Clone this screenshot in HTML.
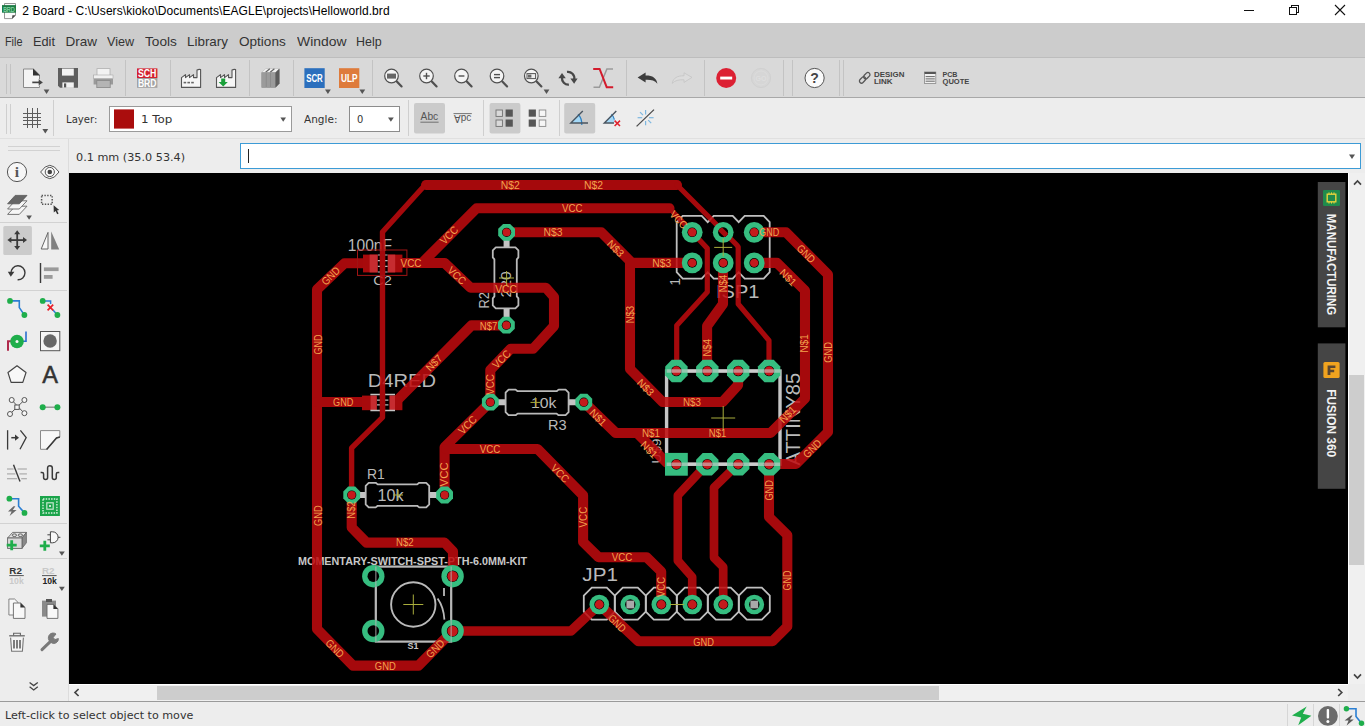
<!DOCTYPE html>
<html>
<head>
<meta charset="utf-8">
<title>2 Board</title>
<style>
*{box-sizing:border-box;margin:0;padding:0}
html,body{width:1365px;height:726px;overflow:hidden;background:#ededed;font-family:"Liberation Sans",sans-serif;color:#333}
.abs{position:absolute}
#title{position:absolute;left:0;top:0;width:1365px;height:23px;background:#fff}
#title .t{position:absolute;left:22.3px;top:4.2px;font-size:12px;line-height:15px;color:#000;white-space:nowrap;letter-spacing:0.06px}
#menu{position:absolute;left:0;top:23px;width:1365px;height:35px;background:#ccc;border-bottom:1px solid #bdbdbd}
#menu span{position:absolute;top:9.5px;font-size:13.5px;line-height:17px;transform-origin:0 0;color:#333;white-space:nowrap}
#tb1{position:absolute;left:0;top:58px;width:1365px;height:40px;background:#d9d9d9;border-bottom:1px solid #a8a8a8}
#tb2{position:absolute;left:0;top:98px;width:1365px;height:41px;background:#ededed;border-bottom:1px solid #e0e0e0}
#left{position:absolute;left:0;top:139px;width:69px;height:562px;background:#ededed}
#cmd{position:absolute;left:69px;top:139px;width:1296px;height:34px;background:#ededed}
#canvas{position:absolute;left:69px;top:173px;width:1279px;height:511px;background:#000;overflow:hidden}
#vs{position:absolute;left:1348px;top:173px;width:17px;height:511px;background:#f0f0f0;border-left:1px solid #fff}
#hs{position:absolute;left:69px;top:684px;width:1279px;height:17px;background:#f0f0f0;border-top:1px solid #fff}
#status{position:absolute;left:0;top:701px;width:1365px;height:25px;background:#ededed;border-top:1px solid #9a9a9a}
.sep{position:absolute;width:1px;background:#c4c4c4}
svg{position:absolute;overflow:visible}
</style>
</head>
<body>
<div id="title">
<svg width="20" height="23" style="left:0;top:0" viewBox="0 0 20 23">
<path d="M4.5 3.5 H15.5 V15.4 L12.2 18.6 H4.5 Z" fill="#fbfbfb" stroke="#8a8a8a" stroke-width="0.9"/>
<path d="M15.6 15.2 L12 18.8 L12.4 15.2 Z" fill="#444"/>
<rect x="2" y="5.1" width="14" height="7.6" fill="#1d7c46"/>
<text x="9" y="11.7" font-size="7.4" fill="#a6f0c2" text-anchor="middle" textLength="11.6" lengthAdjust="spacingAndGlyphs">BRD</text>
</svg>
<div class="t">2 Board - C:\Users\kioko\Documents\EAGLE\projects\Helloworld.brd</div>
<svg width="140" height="23" style="left:1225px;top:0" viewBox="1225 0 140 23">
<g stroke="#111" stroke-width="1" fill="none">
<line x1="1244" y1="10.5" x2="1254" y2="10.5" shape-rendering="crispEdges"/>
<path d="M1289.5 7.5 H1296.5 V14.5 H1289.5 Z M1291.5 7.5 V5.5 H1298.5 V12.5 H1296.5" shape-rendering="crispEdges"/>
<path d="M1335 5 L1345 15 M1345 5 L1335 15" stroke-width="1.1"/>
</g>
</svg>
</div>
<div id="menu">
<span style="left:4.5px;transform:scaleX(0.803)">File</span><span style="left:32.5px;transform:scaleX(0.944)">Edit</span><span style="left:65.5px;transform:scaleX(1.000)">Draw</span><span style="left:107.3px;transform:scaleX(0.937)">View</span><span style="left:144.6px;transform:scaleX(1.010)">Tools</span><span style="left:187px;transform:scaleX(0.993)">Library</span><span style="left:239px;transform:scaleX(1.004)">Options</span><span style="left:296.5px;transform:scaleX(1.031)">Window</span><span style="left:356px;transform:scaleX(0.921)">Help</span>
</div>
<div id="tb1">
<!--TB1S-->
<svg width="1365" height="40" style="left:0;top:0" viewBox="0 58 1365 40">
<g stroke="#c3c3c3" stroke-width="1" shape-rendering="crispEdges">
<line x1="6.5" y1="64" x2="6.5" y2="94"/><line x1="10.5" y1="64" x2="10.5" y2="94"/>
<line x1="125.5" y1="60" x2="125.5" y2="96"/><line x1="170.5" y1="60" x2="170.5" y2="96"/><line x1="249.5" y1="60" x2="249.5" y2="96"/><line x1="293.5" y1="60" x2="293.5" y2="96"/><line x1="372.5" y1="60" x2="372.5" y2="96"/><line x1="626.5" y1="60" x2="626.5" y2="96"/><line x1="704.5" y1="60" x2="704.5" y2="96"/><line x1="783.5" y1="60" x2="783.5" y2="96"/><line x1="792.5" y1="60" x2="792.5" y2="96"/><line x1="839.5" y1="60" x2="839.5" y2="96"/><line x1="843.5" y1="60" x2="843.5" y2="96"/>
</g>
<!-- new doc -->
<path d="M23.5 69 H33.5 L39.5 75 V87.5 H23.5 Z" fill="#f4f4f4" stroke="#8a8a8a" stroke-width="1"/>
<path d="M33 68.6 L40 75.6 H33 Z" fill="#333"/>
<path d="M32 81.2 H38.4 V78.8 L43.4 82.4 L38.4 86 V83.6 H32 Z" fill="#444" stroke="#f4f4f4" stroke-width="0.6"/>
<path d="M43.7 89.5 H49.4 L46.55 94 Z" fill="#555"/>
<!-- save -->
<path d="M58 68 H78 V87.8 H60 L58 85.8 Z" fill="#5e5e5e"/>
<rect x="62" y="68.6" width="11.8" height="7" fill="#f2f2f2"/>
<rect x="62.4" y="82.4" width="11.4" height="5.4" fill="#f2f2f2"/>
<rect x="64" y="83.4" width="2.2" height="4" fill="#555"/>
<!-- print -->
<rect x="97" y="68.6" width="13" height="7" fill="#f2f2f2" stroke="#b0b0b0" stroke-width="0.8"/>
<path d="M93.6 75 H113 V84.5 H93.6 Z" fill="#9a9a9a"/>
<rect x="93.6" y="75" width="19.4" height="3.6" fill="#f0f0f0" stroke="#aaa" stroke-width="0.6"/>
<rect x="96.8" y="80.6" width="13.4" height="7" fill="#b4b4b4" stroke="#888" stroke-width="0.8"/>
<!-- SCH BRD -->
<rect x="137" y="68.4" width="20.4" height="9.6" fill="#d4212f"/>
<rect x="137" y="78" width="20.4" height="9.8" fill="#a2a2a2"/>
<text x="147.2" y="76.9" font-size="10" font-weight="bold" fill="#fff" text-anchor="middle" textLength="18.6" lengthAdjust="spacingAndGlyphs">SCH</text>
<text x="147.2" y="86.5" font-size="10" font-weight="bold" fill="#fff" text-anchor="middle" textLength="18.6" lengthAdjust="spacingAndGlyphs">BRD</text>
<!-- factory 1 -->
<g id="fac" fill="#f6f6f6" stroke="#555" stroke-width="1.1" stroke-linejoin="round">
<path d="M181.5 87.4 V77.6 L185.5 74.6 V77.6 L189.5 74.6 V77.6 L193.5 74.6 V77.6 H197 V70 Q199 69 200.6 69.6 V87.4 Z"/>
</g>
<g fill="#666"><rect x="183.6" y="81.8" width="2.6" height="1.6"/><rect x="187.4" y="81.8" width="2.6" height="1.6"/><rect x="191.2" y="81.8" width="2.6" height="1.6"/></g>
<!-- factory 2 -->
<g fill="#f6f6f6" stroke="#555" stroke-width="1.1" stroke-linejoin="round">
<path d="M216.5 87.4 V77.6 L220.5 74.6 V77.6 L224.5 74.6 V77.6 L228.5 74.6 V77.6 H232 V70 Q234 69 235.6 69.6 V87.4 Z"/>
</g>
<path d="M221.2 78.4 H225.2 V82 H227.8 L223.2 86.6 L218.6 82 H221.2 Z" fill="#1aa03a"/>
<!-- books -->
<g>
<path d="M261.6 72.4 L266 68.6 H279.4 V83.6 L275.6 87.6 H261.6 Z" fill="#777"/>
<path d="M261.6 72.4 L266 68.6 H279.4 L275.4 72.4 Z" fill="#f0f0f0"/>
<path d="M265.6 72.2 L269.8 68.8 M270.2 72.2 L274.4 68.8" stroke="#666" stroke-width="1.2"/>
<rect x="261.6" y="72.4" width="4.3" height="15.2" fill="#9b9b9b"/>
<rect x="266.3" y="72.4" width="4.3" height="15.2" fill="#9b9b9b"/>
<rect x="271" y="72.4" width="4.4" height="15.2" fill="#9b9b9b"/>
<path d="M275.6 72.4 L279.4 68.8 V83.6 L275.6 87.6 Z" fill="#5c5c5c"/>
</g>
<!-- SCR -->
<rect x="304.4" y="68.2" width="20.3" height="19.8" fill="#2b6fbd"/>
<text x="314.5" y="81.8" font-size="10.6" font-weight="bold" fill="#fff" text-anchor="middle" textLength="16.6" lengthAdjust="spacingAndGlyphs">SCR</text>
<path d="M325 89.5 H330.8 L327.9 94 Z" fill="#555"/>
<!-- ULP -->
<rect x="339" y="68.2" width="20.3" height="19.8" fill="#de7b3b"/>
<text x="349.2" y="81.8" font-size="10.6" font-weight="bold" fill="#fff" text-anchor="middle" textLength="16.6" lengthAdjust="spacingAndGlyphs">ULP</text>
<path d="M359.4 89.5 H365.2 L362.3 94 Z" fill="#555"/>
<!-- zoom icons -->
<g fill="#f4f4f4" stroke="#505050" stroke-width="1.2">
<circle cx="391.5" cy="76" r="6.8"/><circle cx="426.5" cy="76" r="6.8"/><circle cx="461.5" cy="76" r="6.8"/><circle cx="497" cy="76" r="6.8"/><circle cx="531.3" cy="76" r="6.8"/>
</g>
<g stroke="#505050" stroke-width="2.2" stroke-linecap="round">
<line x1="396.8" y1="81.4" x2="401.6" y2="86.4"/><line x1="431.8" y1="81.4" x2="436.6" y2="86.4"/><line x1="466.8" y1="81.4" x2="471.6" y2="86.4"/><line x1="502.3" y1="81.4" x2="507.1" y2="86.4"/><line x1="536.6" y1="81.4" x2="541.4" y2="86.4"/>
</g>
<rect x="387" y="73.6" width="9" height="5" fill="#666"/>
<g stroke="#505050" stroke-width="1.4">
<line x1="423.3" y1="76" x2="429.7" y2="76"/><line x1="426.5" y1="72.8" x2="426.5" y2="79.2"/>
<line x1="458.6" y1="76" x2="464.4" y2="76"/>
<line x1="494" y1="74.6" x2="500" y2="74.6"/><line x1="494" y1="77.6" x2="500" y2="77.6"/>
</g>
<rect x="527" y="73.6" width="8.6" height="5" fill="#eee" stroke="#555" stroke-width="1"/>
<rect x="528" y="74.6" width="3.4" height="3" fill="#666"/>
<path d="M543.6 89.5 H549.4 L546.5 94 Z" fill="#555"/>
<!-- refresh -->
<g fill="none" stroke="#484848" stroke-width="2.3">
<path d="M562 77.6 A6.4 6.4 0 0 0 568.9 84.6"/>
<path d="M567 71.9 A6.4 6.4 0 0 1 574.2 79.4"/>
</g>
<path d="M562 73 L565.8 78.2 H558.4 Z" fill="#484848"/>
<path d="M574.1 83.8 L570.4 78.6 H577.6 Z" fill="#484848"/>
<!-- X ratsnest -->
<path d="M593.5 87.2 H599.4 L606.9 69 H613" fill="none" stroke="#9a9a9a" stroke-width="1.5"/>
<path d="M593.2 69 H599.6 L606.7 87.2 H613.2" fill="none" stroke="#d31b2c" stroke-width="2"/>
<!-- undo -->
<path d="M637.6 77.4 L645.6 72.6 V75.6 C652 75.4 656.6 78 657.4 83.8 C654.6 80.4 651 79.6 645.6 79.8 V82.6 Z" fill="#3c3c3c"/>
<!-- redo disabled -->
<path d="M692 77.4 L684 72.8 V75.8 C677.6 75.6 673 78 672.2 83.4 C675 80.4 678.6 79.6 684 79.8 V82.4 Z" fill="#dcdcdc" stroke="#c6c6c6" stroke-width="0.9"/>
<!-- stop -->
<circle cx="726.2" cy="78" r="10" fill="#dc2033"/>
<rect x="720.2" y="76.6" width="12" height="2.9" fill="#fff"/>
<!-- go disabled -->
<circle cx="761" cy="78" r="9.6" fill="#d6d6d6" stroke="#d0d0d0" stroke-width="1"/>
<circle cx="761" cy="78" r="7" fill="none" stroke="#dcdcdc" stroke-width="1"/>
<text x="761" y="80.6" font-size="7" font-weight="bold" fill="#dedede" text-anchor="middle">GO</text>
<!-- help -->
<circle cx="814.6" cy="78" r="9.6" fill="#fafafa" stroke="#555" stroke-width="1"/>
<text x="814.6" y="83.2" font-size="14" font-weight="bold" fill="#444" text-anchor="middle">?</text>
<!-- design link -->
<g fill="none" stroke="#555" stroke-width="1.3">
<rect x="-3.6" y="-2.1" width="7.2" height="4.2" rx="2.1" transform="translate(862.6 79.9) rotate(-45)"/>
<rect x="-3.6" y="-2.1" width="7.2" height="4.2" rx="2.1" transform="translate(866.8 75.7) rotate(-45)"/>
</g>
<text x="874" y="76.8" font-size="7.8" font-weight="bold" fill="#444" textLength="30.4" lengthAdjust="spacingAndGlyphs">DESIGN</text>
<text x="874" y="84" font-size="7.8" font-weight="bold" fill="#444" textLength="18.6" lengthAdjust="spacingAndGlyphs">LINK</text>
<!-- pcb quote -->
<rect x="924.6" y="72" width="11.2" height="11.4" fill="#f0f0f0" stroke="#888" stroke-width="0.8"/>
<rect x="924.6" y="72" width="11.2" height="2" fill="#555"/>
<g stroke="#666" stroke-width="1"><line x1="925.6" y1="76.6" x2="934.8" y2="76.6"/><line x1="925.6" y1="78.9" x2="934.8" y2="78.9"/><line x1="925.6" y1="81.2" x2="934.8" y2="81.2"/></g>
<text x="942.5" y="76.8" font-size="7.8" font-weight="bold" fill="#444" textLength="15" lengthAdjust="spacingAndGlyphs">PCB</text>
<text x="942.5" y="84" font-size="7.8" font-weight="bold" fill="#444" textLength="26.9" lengthAdjust="spacingAndGlyphs">QUOTE</text>
</svg>
<!--TB1E-->
</div>
<div id="tb2">
<!--TB2S-->
<svg width="1365" height="41" style="left:0;top:0" viewBox="0 98 1365 41">
<g stroke="#cfcfcf" stroke-width="1" shape-rendering="crispEdges">
<line x1="6.5" y1="104" x2="6.5" y2="134"/><line x1="10.5" y1="104" x2="10.5" y2="134"/>
<line x1="53.5" y1="100" x2="53.5" y2="136"/><line x1="408.5" y1="100" x2="408.5" y2="136"/><line x1="483.5" y1="100" x2="483.5" y2="136"/><line x1="559.5" y1="100" x2="559.5" y2="136"/>
</g>
<!-- grid icon -->
<g stroke="#5c5c5c" stroke-width="1" shape-rendering="crispEdges">
<line x1="22.5" y1="113.5" x2="41" y2="113.5"/><line x1="22.5" y1="117" x2="41" y2="117"/><line x1="22.5" y1="120.5" x2="41" y2="120.5"/><line x1="22.5" y1="124" x2="41" y2="124"/>
<line x1="27.5" y1="108" x2="27.5" y2="128"/><line x1="32.5" y1="108" x2="32.5" y2="128"/><line x1="37.5" y1="108" x2="37.5" y2="128"/>
</g>
<path d="M42.4 129 H48.2 L45.3 133.5 Z" fill="#555"/>
<!-- Layer select -->
<rect x="109.5" y="106.5" width="182" height="25" fill="#fff" stroke="#9a9a9a" stroke-width="1"/>
<rect x="114" y="109.4" width="20" height="19.2" fill="#aa0d0d"/>
<path d="M280.4 117.4 H286 L283.2 121.8 Z" fill="#555"/>
<!-- angle select -->
<rect x="349.5" y="106.5" width="50" height="25" fill="#fff" stroke="#8c8c8c" stroke-width="1"/>
<path d="M388 117.4 H393.8 L390.9 121.8 Z" fill="#555"/>
<!-- Abc buttons -->
<rect x="414" y="103" width="31" height="30.5" rx="2" fill="#cbcbcb"/>
<text x="420.6" y="120.3" font-size="10.2" fill="#555" textLength="17.6" lengthAdjust="spacingAndGlyphs">Abc</text>
<line x1="420.4" y1="122.2" x2="438.6" y2="122.2" stroke="#666" stroke-width="0.9"/>
<g transform="translate(0 237.2) scale(1 -1)">
<text x="454" y="122" font-size="10.2" fill="#555" textLength="17.2" lengthAdjust="spacingAndGlyphs">Abc</text>
</g>
<line x1="453.5" y1="113.6" x2="471.8" y2="113.6" stroke="#666" stroke-width="0.9"/>
<!-- grid buttons -->
<rect x="489.6" y="103" width="30.8" height="30.5" rx="2" fill="#cbcbcb"/>
<g>
<rect x="496" y="110" width="6.4" height="6.4" fill="#d9d9d9" stroke="#707070" stroke-width="0.9"/>
<rect x="496" y="120" width="6.4" height="6.4" fill="#d9d9d9" stroke="#707070" stroke-width="0.9"/>
<rect x="505.6" y="109.5" width="7.2" height="7.2" fill="#565656"/>
<rect x="505.6" y="119.5" width="7.2" height="7.2" fill="#565656"/>
<rect x="528.7" y="109.5" width="7.2" height="7.2" fill="#565656"/>
<rect x="528.7" y="119.5" width="7.2" height="7.2" fill="#565656"/>
<rect x="539.2" y="110" width="6.6" height="6.4" fill="#f6f6f6" stroke="#8a8a8a" stroke-width="0.9"/>
<rect x="539.2" y="120" width="6.6" height="6.4" fill="#f6f6f6" stroke="#8a8a8a" stroke-width="0.9"/>
</g>
<!-- angle buttons -->
<rect x="564.2" y="103" width="31" height="30.5" rx="2" fill="#cbcbcb"/>
<path d="M571.5 122.8 L578 114.4 A10 10 0 0 1 581.8 122.8 Z" fill="#a3d8f7"/>
<path d="M578 114.2 Q582 118 581.8 125" fill="none" stroke="#2d7fc0" stroke-width="1.2"/>
<path d="M588 123 H570.8 L582.8 111" fill="none" stroke="#4a5560" stroke-width="1.4"/>
<path d="M605 122.8 L611.5 114.4 A10 10 0 0 1 614.4 122.8 Z" fill="#a3d8f7"/>
<path d="M611.5 114.2 Q613.6 116.4 614.4 119.6" fill="none" stroke="#2d7fc0" stroke-width="1.2"/>
<path d="M614 123 H604.3 L616.3 111" fill="none" stroke="#4a5560" stroke-width="1.4"/>
<path d="M614.6 120.6 L620 126 M620 120.6 L614.6 126" stroke="#e0202c" stroke-width="1.5"/>
<!-- star -->
<g stroke="#7db7e0" stroke-width="1.2">
<line x1="645.6" y1="110" x2="645.6" y2="114.4"/><line x1="645.6" y1="121" x2="645.6" y2="125.2"/>
<line x1="637.6" y1="117.7" x2="642.2" y2="117.7"/><line x1="649" y1="117.7" x2="653.6" y2="117.7"/>
<line x1="640" y1="112.2" x2="643" y2="115.2"/><line x1="648.2" y1="120.2" x2="651.2" y2="123.2"/>
</g>
<line x1="636.6" y1="126.4" x2="654" y2="109.6" stroke="#4a4a4a" stroke-width="1.3"/>
</svg>
<div class="abs" id="lay" style="left:65.6px;top:13.7px;font-family:'DejaVu Sans','Liberation Sans',sans-serif;font-size:11px;line-height:16px;white-space:nowrap;color:#333;transform-origin:0 0;transform:scaleX(0.92)">Layer:</div>
<div class="abs" id="top1" style="left:140.8px;top:13.7px;font-family:'DejaVu Sans','Liberation Sans',sans-serif;font-size:11px;line-height:16px;white-space:nowrap;color:#333;transform-origin:0 0;transform:scaleX(1.08)">1 Top</div>
<div class="abs" id="ang" style="left:304px;top:13.7px;font-family:'DejaVu Sans','Liberation Sans',sans-serif;font-size:11px;line-height:16px;white-space:nowrap;color:#333;transform-origin:0 0;transform:scaleX(0.955)">Angle:</div>
<div class="abs" id="zero" style="left:356.6px;top:13.7px;font-family:'DejaVu Sans','Liberation Sans',sans-serif;font-size:11px;line-height:16px;white-space:nowrap;color:#333;transform-origin:0 0;transform:scaleX(0.9)">0</div>
<!--TB2E-->
</div>
<div id="left">
<!--LEFTS-->
<svg width="69" height="562" style="left:0;top:0" viewBox="0 139 69 562">
<line x1="68.5" y1="139" x2="68.5" y2="701" stroke="#dcdcdc" stroke-width="1"/>
<g stroke="#d2d2d2" stroke-width="1" shape-rendering="crispEdges">
<line x1="8" y1="146.5" x2="60" y2="146.5"/><line x1="8" y1="150.5" x2="60" y2="150.5"/>
<line x1="0" y1="222.5" x2="67" y2="222.5"/><line x1="0" y1="290.5" x2="67" y2="290.5"/><line x1="0" y1="523.5" x2="67" y2="523.5"/><line x1="0" y1="558.5" x2="67" y2="558.5"/>
</g>
<!-- info -->
<circle cx="17" cy="172" r="9.6" fill="#f6f6f6" stroke="#555" stroke-width="1"/>
<text x="17" y="177.4" font-family="Liberation Serif,serif" font-weight="bold" font-size="15.5" fill="#555" text-anchor="middle">i</text>
<!-- eye -->
<path d="M40.6 172 Q49.8 158.6 59 172 Q49.8 185.4 40.6 172 Z" fill="#f8f8f8" stroke="#555" stroke-width="1"/>
<circle cx="49.8" cy="172" r="4.6" fill="none" stroke="#555" stroke-width="1"/>
<circle cx="49.8" cy="172" r="2.3" fill="#444"/>
<!-- layers -->
<path d="M15.2 206.2 H27 L19.3 214.4 H7.6 Z" fill="#f6f6f6" stroke="#666" stroke-width="0.9"/>
<path d="M15.2 200.8 H27 L19.3 209 H7.6 Z" fill="#f6f6f6" stroke="#666" stroke-width="0.9"/>
<path d="M15.2 195.4 H27 L19.3 203.8 H7.6 Z" fill="#666" stroke="#555" stroke-width="0.8"/>
<path d="M26.3 215.4 H31.9 L29.1 219.7 Z" fill="#555"/>
<!-- group select -->
<rect x="41.6" y="195.6" width="10.6" height="8.6" fill="none" stroke="#555" stroke-width="1.5" stroke-dasharray="1.4 1.4"/>
<path d="M53.6 205.2 L53.8 212.6 L55.6 211 L57.2 214.2 L58.6 213.5 L57 210.4 L59.2 210 Z" fill="#333"/>
<!-- move -->
<rect x="3.3" y="226" width="28.6" height="29" rx="1.5" fill="#cbcbcb"/>
<g fill="#3a3a3a">
<rect x="16.3" y="233" width="1.8" height="14.4"/><rect x="10" y="239.2" width="14.4" height="1.8"/>
<path d="M17.2 230.2 L20.2 234.2 H14.2 Z"/><path d="M17.2 250 L20.2 246 H14.2 Z"/>
<path d="M7.4 240.1 L11.4 237.1 V243.1 Z"/><path d="M27 240.1 L23 237.1 V243.1 Z"/>
</g>
<!-- mirror -->
<path d="M41.2 249 L48 232.4 V249 Z" fill="#f8f8f8" stroke="#666" stroke-width="1"/>
<path d="M51.2 231.4 L59.2 249.4 H51.2 Z" fill="#808080"/>
<!-- rotate -->
<path d="M11 273.4 A7 7 0 1 1 17.6 279.8" fill="none" stroke="#3a3a3a" stroke-width="1.4"/>
<path d="M7.8 271.8 H14.4 L10.8 276.8 Z" fill="#3a3a3a"/>
<!-- align -->
<line x1="40.5" y1="263" x2="40.5" y2="283" stroke="#3a3a3a" stroke-width="1.4"/>
<rect x="43.9" y="267.4" width="14.7" height="3.7" fill="#9a9a9a"/><rect x="43.9" y="275" width="8.7" height="3.8" fill="#9a9a9a"/>
<!-- route -->
<path d="M10 300.9 H19.3 V307.6 L24.4 315" fill="none" stroke="#2b7fd3" stroke-width="1.6"/>
<circle cx="10" cy="300.9" r="2.9" fill="#1fae4b"/><circle cx="24.4" cy="315" r="2.9" fill="#1fae4b"/>
<!-- ripup -->
<path d="M42.7 300.9 H50.6 V304" fill="none" stroke="#2b7fd3" stroke-width="1.5"/>
<path d="M53 310 L57.4 315" fill="none" stroke="#2b7fd3" stroke-width="1.5"/>
<circle cx="42.7" cy="300.9" r="2.9" fill="#1fae4b"/><circle cx="57.4" cy="315" r="2.9" fill="#1fae4b"/>
<path d="M47.6 304.6 L53.2 310.4 M53.2 304.6 L47.6 310.4" stroke="#e8202c" stroke-width="1.7"/>
<!-- via -->
<path d="M8 350.8 V341.2 H12" fill="none" stroke="#b02a4c" stroke-width="2"/>
<path d="M26 331.6 V341.3 H22" fill="none" stroke="#2b6fd0" stroke-width="1.6"/>
<circle cx="17" cy="341.5" r="6.8" fill="#1fae4b"/><circle cx="17" cy="341.5" r="1.5" fill="#f4f4f4"/>
<!-- hole -->
<rect x="40.5" y="331.5" width="19.3" height="19.2" fill="#f6f6f6" stroke="#555" stroke-width="1"/>
<circle cx="50.1" cy="341" r="6.7" fill="#686868"/>
<!-- polygon -->
<path d="M17 365.8 L26 372.6 L22.8 382.4 H11.1 L8 372.6 Z" fill="#f8f8f8" stroke="#444" stroke-width="1.2" stroke-linejoin="round"/>
<!-- text A -->
<text x="50.1" y="382.6" font-size="23.6" fill="#333" text-anchor="middle" stroke="#333" stroke-width="0.5">A</text>
<!-- fanout -->
<g stroke="#555" stroke-width="1" fill="#f6f6f6">
<path d="M11.7 400 L24.4 413.4 M24.4 400 L10 414" fill="none"/>
<circle cx="11.7" cy="400" r="2.5"/><circle cx="24.4" cy="400" r="2.5"/><circle cx="10" cy="414" r="2.5"/><circle cx="24.4" cy="413.2" r="2.5"/>
<rect x="14.8" y="405" width="4.4" height="4.4"/>
</g>
<!-- link -->
<line x1="42.7" y1="407.2" x2="57.4" y2="407.2" stroke="#8a8a8a" stroke-width="1.3"/>
<circle cx="42.7" cy="407.2" r="3" fill="#1fae4b"/><circle cx="57.4" cy="407.2" r="3" fill="#1fae4b"/>
<!-- split -->
<g stroke="#3a3a3a" stroke-width="1.3" fill="none">
<line x1="7.6" y1="430.2" x2="7.6" y2="449.6"/>
<path d="M20.4 430.4 L26.2 437.5 L20 449.2"/>
<line x1="11.3" y1="437.7" x2="16" y2="437.7" stroke-width="1.5"/>
</g>
<path d="M15 434.6 L19 437.7 L15 440.8 Z" fill="#3a3a3a"/>
<!-- miter -->
<path d="M40.5 430.6 H59.8 V437 L56.5 438 L46.8 449.3 H40.5 Z" fill="#f8f8f8" stroke="#8a8a8a" stroke-width="1"/>
<path d="M46.6 449.4 L56.5 438 L59.9 437" fill="none" stroke="#3a3a3a" stroke-width="1.6"/>
<!-- optimize -->
<g stroke="#ababab" stroke-width="1.2">
<line x1="7" y1="469" x2="13.6" y2="469"/><line x1="17.6" y1="469" x2="26.9" y2="469"/>
<line x1="7" y1="473.9" x2="15.4" y2="473.9"/><line x1="19.4" y1="473.9" x2="26.9" y2="473.9"/>
<line x1="7" y1="478.7" x2="17.2" y2="478.7"/><line x1="21.2" y1="478.7" x2="26.9" y2="478.7"/>
</g>
<line x1="13.5" y1="464.7" x2="20" y2="481.6" stroke="#3a3a3a" stroke-width="1.4"/>
<!-- meander -->
<path d="M40.6 472.4 H42 Q43.6 472.4 43.6 474 V477.4 A2 2 0 0 0 47.6 477.4 V468 A2.35 2.35 0 0 1 52.3 468 V477.4 A2 2 0 0 0 56.3 477.4 V474 Q56.3 472.4 57.9 472.4 H59.3" fill="none" stroke="#3a3a3a" stroke-width="1.5"/>
<!-- autorouter -->
<path d="M9.4 498.7 H18.6 V506.3 L24.5 512.9" fill="none" stroke="#2b7fd3" stroke-width="1.6"/>
<circle cx="9.4" cy="498.7" r="2.9" fill="#1fae4b"/><circle cx="24.5" cy="512.9" r="2.9" fill="#1fae4b"/>
<path d="M13.6 506.2 L8 511.4 H11.6 L9.6 516 L16.6 510 H12.8 L15.4 506.2 Z" fill="#6a6a6a"/>
<!-- DRC -->
<rect x="40" y="496" width="19.9" height="20" fill="#1aa44a"/>
<rect x="43" y="499" width="13.9" height="14" fill="none" stroke="#d8f0df" stroke-width="1.4" stroke-dasharray="1.5 1.2"/>
<rect x="46.8" y="502.8" width="6.4" height="6.4" fill="none" stroke="#c4e8cf" stroke-width="1.2"/>
<rect x="49" y="505" width="2" height="2" fill="#c4e8cf"/>
<!-- add part -->
<path d="M7.6 538 L12.6 532.4 H26.4 L22 538 Z" fill="#e4e4e4" stroke="#666" stroke-width="0.9"/>
<path d="M22 538 L26.4 532.4 V542.8 L22 548.4 Z" fill="#8a8a8a" stroke="#666" stroke-width="0.8"/>
<rect x="7.6" y="538" width="14.4" height="10.4" fill="#d9d9d9" stroke="#666" stroke-width="0.9"/>
<ellipse cx="14.4" cy="535.2" rx="2.2" ry="1.3" fill="none" stroke="#555" stroke-width="0.9"/><ellipse cx="20.4" cy="535.2" rx="2.2" ry="1.3" fill="none" stroke="#555" stroke-width="0.9"/>
<path d="M10.3 540.2 H13.1 V543.8 H16.7 V546.6 H13.1 V550.2 H10.3 V546.6 H6.7 V543.8 H10.3 Z" fill="#1fae4b"/>
<!-- add gate -->
<path d="M50.4 531.8 H52.6 A5.5 5.5 0 0 1 52.6 542.8 H50.4 Z" fill="#f8f8f8" stroke="#444" stroke-width="1"/>
<path d="M47.4 534.8 H50.4 M47.4 539.8 H50.4 M58 537.3 H60.4" stroke="#444" stroke-width="1"/>
<path d="M43.4 540.8 H46.2 V544.4 H49.8 V547.2 H46.2 V550.8 H43.4 V547.2 H39.8 V544.4 H43.4 Z" fill="#1fae4b"/>
<path d="M59 551.4 H64.8 L61.9 555.7 Z" fill="#555"/>
<!-- name -->
<text x="9.3" y="573.8" font-size="8.6" font-weight="bold" fill="#333" textLength="12.6" lengthAdjust="spacingAndGlyphs">R2</text>
<line x1="9.3" y1="575.6" x2="23.8" y2="575.6" stroke="#444" stroke-width="0.9"/>
<text x="9.3" y="583.6" font-size="8.2" font-weight="bold" fill="#c9c9c9" textLength="14.4" lengthAdjust="spacingAndGlyphs">10k</text>
<!-- value -->
<text x="42" y="573.8" font-size="8.6" font-weight="bold" fill="#c9c9c9" textLength="12.6" lengthAdjust="spacingAndGlyphs">R2</text>
<line x1="42" y1="575.6" x2="56.6" y2="575.6" stroke="#444" stroke-width="0.9"/>
<text x="42.4" y="583.6" font-size="8.2" font-weight="bold" fill="#222" textLength="14.4" lengthAdjust="spacingAndGlyphs">10k</text>
<path d="M59 586.8 H64.8 L61.9 591 Z" fill="#555"/>
<!-- copy -->
<path d="M8.9 599 H14.6 L18 602.4 V615 H8.9 Z" fill="#f8f8f8" stroke="#777" stroke-width="0.9"/>
<path d="M13.4 603 H20.6 L25 607.4 V618.4 H13.4 Z" fill="#f8f8f8" stroke="#666" stroke-width="0.9"/>
<path d="M20.4 602.8 L25.2 607.6 H20.4 Z" fill="#333"/>
<!-- paste -->
<rect x="42" y="600.6" width="14" height="16" fill="#8a8a8a"/>
<rect x="46" y="599" width="6" height="3" fill="#555"/>
<path d="M47 604.4 H53.6 L57.9 608.8 V618.4 H47 Z" fill="#f8f8f8" stroke="#666" stroke-width="0.9"/>
<path d="M53.4 604.2 L58 608.9 H53.4 Z" fill="#333"/>
<!-- trash -->
<path d="M13.6 635.4 V633.2 H20.4 V635.4" fill="none" stroke="#666" stroke-width="1.1"/>
<line x1="9.2" y1="635.8" x2="24.8" y2="635.8" stroke="#666" stroke-width="1.3"/>
<path d="M10.6 637.6 L11.6 651.2 H22.4 L23.4 637.6" fill="#f4f4f4" stroke="#777" stroke-width="1.1"/>
<g stroke="#555" stroke-width="1.5"><line x1="14" y1="640" x2="14" y2="648.6"/><line x1="17" y1="640" x2="17" y2="648.6"/><line x1="20" y1="640" x2="20" y2="648.6"/></g>
<!-- wrench -->
<path d="M42 649.6 L51.6 640.4" stroke="#7a7a7a" stroke-width="3" stroke-linecap="round"/>
<path d="M50.2 641.6 A4.6 4.6 0 0 1 56 634 L53.2 637.4 L54.8 639.6 L58.4 638.6 A4.6 4.6 0 0 1 51.4 642.8 Z" fill="#7a7a7a" stroke="#7a7a7a" stroke-width="1"/>
<!-- chevrons -->
<path d="M29.6 682.4 L33.7 685.6 L37.8 682.4 M29.6 686.8 L33.7 690 L37.8 686.8" fill="none" stroke="#444" stroke-width="1.3"/>
</svg>
<!--LEFTE-->
</div>
<div id="cmd">
<div class="abs" id="coord" style="left:7.3px;top:10.8px;font-family:'DejaVu Sans','Liberation Sans',sans-serif;font-size:11px;line-height:16px;white-space:nowrap;color:#333;transform-origin:0 0;transform:scaleX(1.02)">0.1 mm (35.0 53.4)</div>
<div class="abs" style="left:171px;top:4px;width:1121px;height:26px;background:#fff;border:1px solid #3c9bd6"></div>
<div class="abs" style="left:179px;top:10px;width:1px;height:14px;background:#222"></div>
<svg width="10" height="8" style="left:1279px;top:14px" viewBox="0 0 10 8"><path d="M1 1.4 H7 L4 6 Z" fill="#555"/></svg>
</div>
<div id="canvas">
<!--PCBS-->
<svg width="1279" height="511" style="left:0;top:0" viewBox="69 173 1279 511" font-family="Liberation Sans,sans-serif">
<g><path d="M497.3 402.2 H505.6 M568.6 402.2 H576.8" stroke="#c4c4c4" stroke-width="6" fill="none"/>
<polygon points="508.6,389.6 515.6,389.6 517.6,391.2 556.6,391.2 558.6,389.6 565.6,389.6 568.6,392.6 568.6,412.2 565.6,415.2 558.6,415.2 556.6,413.6 517.6,413.6 515.6,415.2 508.6,415.2 505.6,412.2 505.6,392.6" fill="none" stroke="#bababa" stroke-width="1.8" stroke-linejoin="round"/>
<path d="M358.7 495 H365.7 M429.2 495 H437.6" stroke="#c4c4c4" stroke-width="6" fill="none"/>
<polygon points="368.7,482.8 375.7,482.8 377.7,484.4 417.2,484.4 419.2,482.8 426.2,482.8 429.2,485.8 429.2,504.4 426.2,507.4 419.2,507.4 417.2,505.8 377.7,505.8 375.7,507.4 368.7,507.4 365.7,504.4 365.7,485.8" fill="none" stroke="#bababa" stroke-width="1.8" stroke-linejoin="round"/>
<path d="M506.6 240 V247.4 M506.6 308.4 V317" stroke="#c4c4c4" stroke-width="6" fill="none"/>
<polygon points="495.8,247.4 515.4,247.4 518.4,250.4 518.4,257.4 516.8,259.4 516.8,296.4 518.4,298.4 518.4,305.4 515.4,308.4 495.8,308.4 492.8,305.4 492.8,298.4 494.4,296.4 494.4,259.4 492.8,257.4 492.8,250.4" fill="none" stroke="#bababa" stroke-width="1.8" stroke-linejoin="round"/>
<path d="M676.7 222.2 L682.7 215.8 H701.7 L707.7 222.2 L713.7 215.8 H732.7 L738.7 222.2 L744.7 215.8 H763.7 L769.7 222.2 V272.2 L763.7 278.6 H744.7 L738.7 272.2 L732.7 278.6 H713.7 L707.7 272.2 L701.7 278.6 H682.7 L676.7 272.2 Z" fill="none" stroke="#c0c0c0" stroke-width="1.8"/>
<path d="M591.8 587.6 H606.8 L614.8 595.6 V611.6 L606.8 619.6 H591.8 L583.8 611.6 V595.6 Z" fill="none" stroke="#c0c0c0" stroke-width="1.8"/>
<path d="M622.8 587.6 H637.8 L645.8 595.6 V611.6 L637.8 619.6 H622.8 L614.8 611.6 V595.6 Z" fill="none" stroke="#c0c0c0" stroke-width="1.8"/>
<path d="M653.8 587.6 H668.8 L676.8 595.6 V611.6 L668.8 619.6 H653.8 L645.8 611.6 V595.6 Z" fill="none" stroke="#c0c0c0" stroke-width="1.8"/>
<path d="M684.8 587.6 H699.8 L707.8 595.6 V611.6 L699.8 619.6 H684.8 L676.8 611.6 V595.6 Z" fill="none" stroke="#c0c0c0" stroke-width="1.8"/>
<path d="M715.8 587.6 H730.8 L738.8 595.6 V611.6 L730.8 619.6 H715.8 L707.8 611.6 V595.6 Z" fill="none" stroke="#c0c0c0" stroke-width="1.8"/>
<path d="M746.8 587.6 H761.8 L769.8 595.6 V611.6 L761.8 619.6 H746.8 L738.8 611.6 V595.6 Z" fill="none" stroke="#c0c0c0" stroke-width="1.8"/>
<rect x="666.6" y="371" width="113.4" height="93.2" fill="none" stroke="#c6c6c6" stroke-width="3.4"/>
<rect x="375.8" y="566.6" width="75.4" height="75" fill="none" stroke="#bababa" stroke-width="2.2"/>
<circle cx="413.3" cy="604.5" r="22.2" fill="none" stroke="#bababa" stroke-width="1.9"/>
<path d="M437.6 598.6 Q443.6 607 444.4 619.6 M444 588 V596" fill="none" stroke="#bababa" stroke-width="1.8"/></g>
<g><text transform="translate(347.8 250.6)" font-size="16" fill="#bababa" textLength="44.2" lengthAdjust="spacingAndGlyphs" font-weight="normal" text-anchor="start">100nF</text>
<text transform="translate(373.3 284.8)" font-size="13.6" fill="#bababa" textLength="18.6" lengthAdjust="spacingAndGlyphs" font-weight="normal" text-anchor="start">C2</text>
<text transform="translate(367.8 386.8)" font-size="18.6" fill="#bababa" textLength="68.2" lengthAdjust="spacingAndGlyphs" font-weight="normal" text-anchor="start">D4RED</text>
<text transform="translate(548 429.6)" font-size="15" fill="#bababa" textLength="18.6" lengthAdjust="spacingAndGlyphs" font-weight="normal" text-anchor="start">R3</text>
<text transform="translate(531 407.6)" font-size="15.2" fill="#bababa" textLength="25.4" lengthAdjust="spacingAndGlyphs" font-weight="normal" text-anchor="start">10k</text>
<text transform="translate(367 479.2)" font-size="15" fill="#bababa" textLength="17.8" lengthAdjust="spacingAndGlyphs" font-weight="normal" text-anchor="start">R1</text>
<text transform="translate(377.5 501.4)" font-size="15.6" fill="#bababa" textLength="26" lengthAdjust="spacingAndGlyphs" font-weight="normal" text-anchor="start">10k</text>
<text transform="translate(489 308.6) rotate(-90)" font-size="15" fill="#bababa" textLength="16.5" lengthAdjust="spacingAndGlyphs" font-weight="normal" text-anchor="start">R2</text>
<text transform="translate(511.4 297.4) rotate(-90)" font-size="15" fill="#bababa" textLength="26" lengthAdjust="spacingAndGlyphs" font-weight="normal" text-anchor="start">220</text>
<text transform="translate(716 298.4)" font-size="18.4" fill="#bababa" textLength="43.4" lengthAdjust="spacingAndGlyphs" font-weight="normal" text-anchor="start">ISP1</text>
<text transform="translate(680 285.6) rotate(-90)" font-size="15" fill="#bababa" textLength="7.4" lengthAdjust="spacingAndGlyphs" font-weight="normal" text-anchor="start">1</text>
<text transform="translate(582.3 581)" font-size="18.2" fill="#bababa" textLength="35.6" lengthAdjust="spacingAndGlyphs" font-weight="normal" text-anchor="start">JP1</text>
<text transform="translate(800.4 465.4) rotate(-90)" font-size="20.6" fill="#bababa" textLength="92.5" lengthAdjust="spacingAndGlyphs" font-weight="normal" text-anchor="start">ATTINY85</text>
<text transform="translate(661 463.6) rotate(-90)" font-size="12" fill="#bababa" textLength="25" lengthAdjust="spacingAndGlyphs" font-weight="normal" text-anchor="start">U$9</text>
<text transform="translate(298 565.4)" font-size="11.4" fill="#c8c8c8" textLength="229" lengthAdjust="spacingAndGlyphs" font-weight="bold" text-anchor="start">MOMENTARY-SWITCH-SPST-PTH-6.0MM-KIT</text>
<text transform="translate(407.6 649.4)" font-size="8.8" fill="#c8c8c8" textLength="11" lengthAdjust="spacingAndGlyphs" font-weight="bold" text-anchor="start">S1</text></g>
<g opacity="0.86"><polyline points="426,185 677,185" fill="none" stroke="#c00b0e" stroke-width="10.1" stroke-linejoin="round" stroke-linecap="round"/>
<polyline points="425,185 382.5,232 382.5,417.4 351.6,448 351.6,495" fill="none" stroke="#c00b0e" stroke-width="5.4" stroke-linejoin="round" stroke-linecap="round"/>
<polyline points="677,185 736.8,245 738.2,247 738.2,304 769,340.5 769,371" fill="none" stroke="#c00b0e" stroke-width="5.2" stroke-linejoin="round" stroke-linecap="round"/>
<polyline points="397,263 444.6,263 470.5,287.7 545.9,287.7 554,297 554,326 533,348.8 510.7,348.8 490.3,370 490.3,402" fill="none" stroke="#c00b0e" stroke-width="10.1" stroke-linejoin="round" stroke-linecap="round"/>
<polyline points="422.5,262.5 476.6,208.2 669.5,208.2" fill="none" stroke="#c00b0e" stroke-width="10.1" stroke-linejoin="round" stroke-linecap="round"/>
<polyline points="669.5,208.2 692.2,232.3 707.3,248.4 707.3,292 676.7,325.5 676.7,371" fill="none" stroke="#c00b0e" stroke-width="5.2" stroke-linejoin="round" stroke-linecap="round"/>
<polyline points="490.3,402 444.6,447 444.6,495" fill="none" stroke="#c00b0e" stroke-width="10.1" stroke-linejoin="round" stroke-linecap="round"/>
<polyline points="446,449 537.6,449 583.1,495.4 583.1,542 598.5,557.2 646.5,557.2 661.2,571.5 661.2,604.5" fill="none" stroke="#c00b0e" stroke-width="10.1" stroke-linejoin="round" stroke-linecap="round"/>
<polyline points="363,263.3 344.4,263.3 317,289.5 317,629 353,665.6 418.5,665.6 452.6,631" fill="none" stroke="#c00b0e" stroke-width="10.1" stroke-linejoin="round" stroke-linecap="round"/>
<polyline points="317,402 364,402" fill="none" stroke="#c00b0e" stroke-width="10.1" stroke-linejoin="round" stroke-linecap="round"/>
<polyline points="395.5,402 471.5,325.4 506.4,325.4" fill="none" stroke="#c00b0e" stroke-width="10.1" stroke-linejoin="round" stroke-linecap="round"/>
<polyline points="506.6,232.3 601.3,232.3 630,261 630,369 662.6,402 722.6,402 738.1,385 738.1,371" fill="none" stroke="#c00b0e" stroke-width="10.1" stroke-linejoin="round" stroke-linecap="round"/>
<polyline points="630,262.9 692.2,262.9" fill="none" stroke="#c00b0e" stroke-width="10.1" stroke-linejoin="round" stroke-linecap="round"/>
<polyline points="754.2,232.3 786,232.3 828,274.5 828,432 796,464 769,464" fill="none" stroke="#c00b0e" stroke-width="10.1" stroke-linejoin="round" stroke-linecap="round"/>
<polyline points="754.2,262.9 777,262.9 805,290.5 805,398.5 770.5,433 615.8,433 583.8,402" fill="none" stroke="#c00b0e" stroke-width="10.1" stroke-linejoin="round" stroke-linecap="round"/>
<polyline points="637,433 666.5,462.5 676,464" fill="none" stroke="#c00b0e" stroke-width="10.1" stroke-linejoin="round" stroke-linecap="round"/>
<polyline points="723,262.9 723,304 707.1,326 707.1,371" fill="none" stroke="#c00b0e" stroke-width="10.1" stroke-linejoin="round" stroke-linecap="round"/>
<polyline points="769,464 769,517 787.3,535 787.3,626.5 772.5,641.3 638.5,641.3 599.3,604.5" fill="none" stroke="#c00b0e" stroke-width="10.1" stroke-linejoin="round" stroke-linecap="round"/>
<polyline points="452.6,631 571,631 599.3,604.5" fill="none" stroke="#c00b0e" stroke-width="9.5" stroke-linejoin="round" stroke-linecap="round"/>
<polyline points="351.7,495 351.7,527.5 366.5,542.6 444.6,542.6 453,551.5 453,575" fill="none" stroke="#c00b0e" stroke-width="10.1" stroke-linejoin="round" stroke-linecap="round"/>
<polyline points="707.1,464 677.8,495.4 677.8,560.7 692.2,577 692.2,604.5" fill="none" stroke="#c00b0e" stroke-width="8.6" stroke-linejoin="round" stroke-linecap="round"/>
<polyline points="738.1,464 714,487.5 714,557.6 723.2,567 723.2,604.5" fill="none" stroke="#c00b0e" stroke-width="8.7" stroke-linejoin="round" stroke-linecap="round"/></g>
<g><rect x="363" y="254.6" width="14.6" height="17.8" fill="#a70a0c"/>
<rect x="387.8" y="254.6" width="14.6" height="17.8" fill="#a70a0c"/>
<rect x="369.6" y="254.6" width="8" height="17.8" fill="#c62c30"/>
<rect x="387.8" y="254.6" width="7.4" height="17.8" fill="#c62c30"/>
<rect x="357.5" y="250" width="49.4" height="25.4" fill="none" stroke="#a01414" stroke-width="1"/>
<rect x="362" y="395.6" width="14.4" height="14.6" fill="#a70a0c"/>
<rect x="389.6" y="395.6" width="12.8" height="14.6" fill="#a70a0c"/>
<rect x="370.6" y="395.6" width="6.2" height="14.6" fill="#c62c30"/>
<rect x="389.6" y="395.6" width="5.4" height="14.6" fill="#c62c30"/></g>
<g><circle cx="692.2" cy="232.3" r="10.4" fill="#36bd80"/>
<circle cx="692.2" cy="232.3" r="4.8" fill="#000"/>
<circle cx="692.2" cy="232.3" r="4.2" fill="#c41a1c"/>
<circle cx="692.2" cy="262.9" r="10.4" fill="#36bd80"/>
<circle cx="692.2" cy="262.9" r="4.8" fill="#000"/>
<circle cx="692.2" cy="262.9" r="4.2" fill="#c41a1c"/>
<circle cx="723.2" cy="232.3" r="10.4" fill="#36bd80"/>
<circle cx="723.2" cy="232.3" r="4.8" fill="#000"/>
<circle cx="723.2" cy="232.3" r="4.2" fill="#c41a1c"/>
<circle cx="723.2" cy="262.9" r="10.4" fill="#36bd80"/>
<circle cx="723.2" cy="262.9" r="4.8" fill="#000"/>
<circle cx="723.2" cy="262.9" r="4.2" fill="#c41a1c"/>
<circle cx="754.2" cy="232.3" r="10.4" fill="#36bd80"/>
<circle cx="754.2" cy="232.3" r="4.8" fill="#000"/>
<circle cx="754.2" cy="232.3" r="4.2" fill="#c41a1c"/>
<circle cx="754.2" cy="262.9" r="10.4" fill="#36bd80"/>
<circle cx="754.2" cy="262.9" r="4.8" fill="#000"/>
<circle cx="754.2" cy="262.9" r="4.2" fill="#c41a1c"/>
<polygon points="671.8,359.8 681.0,359.8 687.6,366.4 687.6,375.6 681.0,382.2 671.8,382.2 665.2,375.6 665.2,366.4" fill="#36bd80"/>
<circle cx="676.4" cy="371" r="5.3" fill="#000"/>
<circle cx="676.4" cy="371" r="4.7" fill="#c41a1c"/>
<polygon points="702.7,359.8 711.9,359.8 718.5,366.4 718.5,375.6 711.9,382.2 702.7,382.2 696.1,375.6 696.1,366.4" fill="#36bd80"/>
<circle cx="707.3" cy="371" r="5.3" fill="#000"/>
<circle cx="707.3" cy="371" r="4.7" fill="#c41a1c"/>
<polygon points="733.6,359.8 742.8,359.8 749.4,366.4 749.4,375.6 742.8,382.2 733.6,382.2 727.0,375.6 727.0,366.4" fill="#36bd80"/>
<circle cx="738.2" cy="371" r="5.3" fill="#000"/>
<circle cx="738.2" cy="371" r="4.7" fill="#c41a1c"/>
<polygon points="764.5,359.8 773.7,359.8 780.3,366.4 780.3,375.6 773.7,382.2 764.5,382.2 757.9,375.6 757.9,366.4" fill="#36bd80"/>
<circle cx="769.1" cy="371" r="5.3" fill="#000"/>
<circle cx="769.1" cy="371" r="4.7" fill="#c41a1c"/>
<rect x="665" y="452.9" width="22.8" height="22.8" fill="#36bd80"/>
<circle cx="676.4" cy="464.3" r="5.4" fill="#000"/>
<circle cx="676.4" cy="464.3" r="4.8" fill="#c41a1c"/>
<polygon points="702.7,453.1 711.9,453.1 718.5,459.7 718.5,468.9 711.9,475.5 702.7,475.5 696.1,468.9 696.1,459.7" fill="#36bd80"/>
<circle cx="707.3" cy="464.3" r="5.3" fill="#000"/>
<circle cx="707.3" cy="464.3" r="4.7" fill="#c41a1c"/>
<polygon points="733.6,453.1 742.8,453.1 749.4,459.7 749.4,468.9 742.8,475.5 733.6,475.5 727.0,468.9 727.0,459.7" fill="#36bd80"/>
<circle cx="738.2" cy="464.3" r="5.3" fill="#000"/>
<circle cx="738.2" cy="464.3" r="4.7" fill="#c41a1c"/>
<polygon points="764.5,453.1 773.7,453.1 780.3,459.7 780.3,468.9 773.7,475.5 764.5,475.5 757.9,468.9 757.9,459.7" fill="#36bd80"/>
<circle cx="769.1" cy="464.3" r="5.3" fill="#000"/>
<circle cx="769.1" cy="464.3" r="4.7" fill="#c41a1c"/>
<polygon points="503.1,223.9 510.1,223.9 515.0,228.8 515.0,235.8 510.1,240.7 503.1,240.7 498.2,235.8 498.2,228.8" fill="#36bd80"/>
<circle cx="506.6" cy="232.3" r="4.6" fill="#000"/>
<circle cx="506.6" cy="232.3" r="4" fill="#c41a1c"/>
<polygon points="502.9,316.8 509.9,316.8 514.8,321.7 514.8,328.7 509.9,333.6 502.9,333.6 498.0,328.7 498.0,321.7" fill="#36bd80"/>
<circle cx="506.4" cy="325.2" r="4.6" fill="#000"/>
<circle cx="506.4" cy="325.2" r="4" fill="#c41a1c"/>
<polygon points="486.8,393.8 493.8,393.8 498.7,398.7 498.7,405.7 493.8,410.6 486.8,410.6 481.9,405.7 481.9,398.7" fill="#36bd80"/>
<circle cx="490.3" cy="402.2" r="4.6" fill="#000"/>
<circle cx="490.3" cy="402.2" r="4" fill="#c41a1c"/>
<polygon points="580.3,393.8 587.3,393.8 592.2,398.7 592.2,405.7 587.3,410.6 580.3,410.6 575.4,405.7 575.4,398.7" fill="#36bd80"/>
<circle cx="583.8" cy="402.2" r="4.6" fill="#000"/>
<circle cx="583.8" cy="402.2" r="4" fill="#c41a1c"/>
<polygon points="348.2,486.6 355.2,486.6 360.1,491.5 360.1,498.5 355.2,503.4 348.2,503.4 343.3,498.5 343.3,491.5" fill="#36bd80"/>
<circle cx="351.7" cy="495" r="4.6" fill="#000"/>
<circle cx="351.7" cy="495" r="4" fill="#c41a1c"/>
<polygon points="441.1,486.6 448.1,486.6 453.0,491.5 453.0,498.5 448.1,503.4 441.1,503.4 436.2,498.5 436.2,491.5" fill="#36bd80"/>
<circle cx="444.6" cy="495" r="4.6" fill="#000"/>
<circle cx="444.6" cy="495" r="4" fill="#c41a1c"/>
<circle cx="373.3" cy="576.2" r="11.2" fill="#36bd80"/>
<circle cx="373.3" cy="576.2" r="5.8" fill="#000"/>
<circle cx="373.3" cy="631" r="11.2" fill="#36bd80"/>
<circle cx="373.3" cy="631" r="5.8" fill="#000"/>
<circle cx="452.6" cy="576.2" r="11.2" fill="#36bd80"/>
<circle cx="452.6" cy="576.2" r="5.8" fill="#000"/>
<circle cx="452.6" cy="576.2" r="5.2" fill="#c41a1c"/>
<circle cx="452.6" cy="631" r="11.2" fill="#36bd80"/>
<circle cx="452.6" cy="631" r="5.8" fill="#000"/>
<circle cx="452.6" cy="631" r="5.2" fill="#c41a1c"/>
<circle cx="599.3" cy="604.5" r="9.8" fill="#36bd80"/>
<circle cx="599.3" cy="604.5" r="5" fill="#000"/>
<circle cx="599.3" cy="604.5" r="4.4" fill="#c41a1c"/>
<circle cx="630.3" cy="604.5" r="9.8" fill="#36bd80"/>
<circle cx="630.3" cy="604.5" r="5.2" fill="#000"/>
<rect x="626.4" y="600.6" width="7.8" height="7.8" fill="#a9a9a9"/>
<circle cx="661.3" cy="604.5" r="9.8" fill="#36bd80"/>
<circle cx="661.3" cy="604.5" r="5" fill="#000"/>
<circle cx="661.3" cy="604.5" r="4.4" fill="#c41a1c"/>
<circle cx="692.3" cy="604.5" r="9.8" fill="#36bd80"/>
<circle cx="692.3" cy="604.5" r="5" fill="#000"/>
<circle cx="692.3" cy="604.5" r="4.4" fill="#c41a1c"/>
<circle cx="723.3" cy="604.5" r="9.8" fill="#36bd80"/>
<circle cx="723.3" cy="604.5" r="5" fill="#000"/>
<circle cx="723.3" cy="604.5" r="4.4" fill="#c41a1c"/>
<circle cx="754.3" cy="604.5" r="9.8" fill="#36bd80"/>
<circle cx="754.3" cy="604.5" r="5.2" fill="#000"/>
<rect x="750.4" y="600.6" width="7.8" height="7.8" fill="#a9a9a9"/></g>
<g><path d="M370.4 394.4 H395 M370.4 410.4 H395" stroke="#c4c4c4" stroke-width="1.5" fill="none"/>
<path d="M377 400.2 H388.4 M377 404.9 H388.4" stroke="#bababa" stroke-width="1.2" fill="none"/>
<path d="M377.8 255 H387.6 M377.8 260.6 H387.6 M377.8 266.4 H387.6 M377.8 272 H387.6" stroke="#bababa" stroke-width="1.1" fill="none"/>
<path d="M382.5 253.5 V273.5 M382.5 393 V412" stroke="#a5090c" stroke-width="5.4" fill="none"/>
<clipPath id="hc"><circle cx="723.2" cy="232.3" r="4.9"/></clipPath>
<circle cx="723.2" cy="232.3" r="4.9" fill="#000"/>
<path d="M713 222 L733 242" stroke="#a70a0c" stroke-width="5.2" clip-path="url(#hc)"/>
<path d="M375.8 566.6 V642 M451.2 566.6 V642" stroke="#b4b4b4" stroke-opacity="0.55" stroke-width="1.6" fill="none"/>
<path d="M666.6 371 H780 M666.6 464.2 H780" stroke="#d0d0d0" stroke-opacity="0.6" stroke-width="3.4" fill="none"/></g>
<g><path d="M714.2 247.4 H732.2 M723.2 238.4 V256.4" stroke="#a9ad3c" stroke-width="1" fill="none"/>
<path d="M530.5 402.4 H540.5 M535.5 397.4 V407.4" stroke="#a9ad3c" stroke-width="1" fill="none"/>
<path d="M393 495 H403 M398 490 V500" stroke="#a9ad3c" stroke-width="1" fill="none"/>
<path d="M711.2 418 H735.2 M723.2 406 V430" stroke="#a9ad3c" stroke-width="1" fill="none"/>
<path d="M403.3 604.5 H423.3 M413.3 594.5 V614.5" stroke="#a9ad3c" stroke-width="1" fill="none"/>
<path d="M670 604.5 H684" stroke="#a9ad3c" stroke-width="1"/>
<path d="M506.6 271 V286 M499 278 H514" stroke="#a9ad3c" stroke-width="1"/></g>
<g><text transform="translate(510.2 185.2)" x="0" y="0" font-size="10.8" fill="#f3a24e" text-anchor="middle" dominant-baseline="central" textLength="19" lengthAdjust="spacingAndGlyphs" font-weight="normal">N$2</text>
<text transform="translate(593.6 185.2)" x="0" y="0" font-size="10.8" fill="#f3a24e" text-anchor="middle" dominant-baseline="central" textLength="19" lengthAdjust="spacingAndGlyphs" font-weight="normal">N$2</text>
<text transform="translate(572.2 208.2)" x="0" y="0" font-size="10.8" fill="#f3a24e" text-anchor="middle" dominant-baseline="central" textLength="20.5" lengthAdjust="spacingAndGlyphs" font-weight="normal">VCC</text>
<text transform="translate(552.9 232.3)" x="0" y="0" font-size="10.8" fill="#f3a24e" text-anchor="middle" dominant-baseline="central" textLength="19" lengthAdjust="spacingAndGlyphs" font-weight="normal">N$3</text>
<text transform="translate(661.8 263)" x="0" y="0" font-size="10.8" fill="#f3a24e" text-anchor="middle" dominant-baseline="central" textLength="19" lengthAdjust="spacingAndGlyphs" font-weight="normal">N$3</text>
<text transform="translate(448.8 235) rotate(-45)" x="0" y="0" font-size="10.8" fill="#f3a24e" text-anchor="middle" dominant-baseline="central" textLength="20.5" lengthAdjust="spacingAndGlyphs" font-weight="normal">VCC</text>
<text transform="translate(457 275.3) rotate(43)" x="0" y="0" font-size="10.8" fill="#f3a24e" text-anchor="middle" dominant-baseline="central" textLength="20.5" lengthAdjust="spacingAndGlyphs" font-weight="normal">VCC</text>
<text transform="translate(411 263)" x="0" y="0" font-size="10.8" fill="#f3a24e" text-anchor="middle" dominant-baseline="central" textLength="21" lengthAdjust="spacingAndGlyphs" font-weight="normal">VCC</text>
<text transform="translate(506 288.6)" x="0" y="0" font-size="10.8" fill="#f3a24e" text-anchor="middle" dominant-baseline="central" textLength="21.5" lengthAdjust="spacingAndGlyphs" font-weight="normal">VCC</text>
<text transform="translate(330.5 275.8) rotate(-45)" x="0" y="0" font-size="10.8" fill="#f3a24e" text-anchor="middle" dominant-baseline="central" textLength="21" lengthAdjust="spacingAndGlyphs" font-weight="normal">GND</text>
<text transform="translate(678.8 219.5) rotate(47)" x="0" y="0" font-size="10.8" fill="#f3a24e" text-anchor="middle" dominant-baseline="central" textLength="20" lengthAdjust="spacingAndGlyphs" font-weight="normal">VCC</text>
<text transform="translate(769.2 232.4)" x="0" y="0" font-size="10.8" fill="#f3a24e" text-anchor="middle" dominant-baseline="central" textLength="20" lengthAdjust="spacingAndGlyphs" font-weight="normal">GND</text>
<text transform="translate(806.3 253.7) rotate(45)" x="0" y="0" font-size="10.8" fill="#f3a24e" text-anchor="middle" dominant-baseline="central" textLength="21" lengthAdjust="spacingAndGlyphs" font-weight="normal">GND</text>
<text transform="translate(788.3 277.3) rotate(45)" x="0" y="0" font-size="10.8" fill="#f3a24e" text-anchor="middle" dominant-baseline="central" textLength="19" lengthAdjust="spacingAndGlyphs" font-weight="normal">N$1</text>
<text transform="translate(615.8 248.4) rotate(45)" x="0" y="0" font-size="10.8" fill="#f3a24e" text-anchor="middle" dominant-baseline="central" textLength="19" lengthAdjust="spacingAndGlyphs" font-weight="normal">N$3</text>
<text transform="translate(723 283.5) rotate(-90)" x="0" y="0" font-size="10.8" fill="#f3a24e" text-anchor="middle" dominant-baseline="central" textLength="17.5" lengthAdjust="spacingAndGlyphs" font-weight="normal">N$4</text>
<text transform="translate(629.6 314.6) rotate(-90)" x="0" y="0" font-size="10.8" fill="#f3a24e" text-anchor="middle" dominant-baseline="central" textLength="17.5" lengthAdjust="spacingAndGlyphs" font-weight="normal">N$3</text>
<text transform="translate(317.5 344.4) rotate(-90)" x="0" y="0" font-size="10.8" fill="#f3a24e" text-anchor="middle" dominant-baseline="central" textLength="20" lengthAdjust="spacingAndGlyphs" font-weight="normal">GND</text>
<text transform="translate(343.2 402.2)" x="0" y="0" font-size="10.8" fill="#f3a24e" text-anchor="middle" dominant-baseline="central" textLength="20.3" lengthAdjust="spacingAndGlyphs" font-weight="normal">GND</text>
<text transform="translate(488.6 325.8)" x="0" y="0" font-size="10.8" fill="#f3a24e" text-anchor="middle" dominant-baseline="central" textLength="17.5" lengthAdjust="spacingAndGlyphs" font-weight="normal">N$7</text>
<text transform="translate(433.8 362.7) rotate(-45)" x="0" y="0" font-size="10.8" fill="#f3a24e" text-anchor="middle" dominant-baseline="central" textLength="18" lengthAdjust="spacingAndGlyphs" font-weight="normal">N$7</text>
<text transform="translate(501.4 359) rotate(-45)" x="0" y="0" font-size="10.8" fill="#f3a24e" text-anchor="middle" dominant-baseline="central" textLength="21" lengthAdjust="spacingAndGlyphs" font-weight="normal">VCC</text>
<text transform="translate(490.2 384.4) rotate(-90)" x="0" y="0" font-size="10.8" fill="#f3a24e" text-anchor="middle" dominant-baseline="central" textLength="20.7" lengthAdjust="spacingAndGlyphs" font-weight="normal">VCC</text>
<text transform="translate(467.4 424.7) rotate(-45)" x="0" y="0" font-size="10.8" fill="#f3a24e" text-anchor="middle" dominant-baseline="central" textLength="21" lengthAdjust="spacingAndGlyphs" font-weight="normal">VCC</text>
<text transform="translate(490.1 449.2)" x="0" y="0" font-size="10.8" fill="#f3a24e" text-anchor="middle" dominant-baseline="central" textLength="20.6" lengthAdjust="spacingAndGlyphs" font-weight="normal">VCC</text>
<text transform="translate(706.9 347.8) rotate(-90)" x="0" y="0" font-size="10.8" fill="#f3a24e" text-anchor="middle" dominant-baseline="central" textLength="17.5" lengthAdjust="spacingAndGlyphs" font-weight="normal">N$4</text>
<text transform="translate(804.4 343.4) rotate(-90)" x="0" y="0" font-size="10.8" fill="#f3a24e" text-anchor="middle" dominant-baseline="central" textLength="18" lengthAdjust="spacingAndGlyphs" font-weight="normal">N$1</text>
<text transform="translate(828.4 352.4) rotate(-90)" x="0" y="0" font-size="10.8" fill="#f3a24e" text-anchor="middle" dominant-baseline="central" textLength="20.7" lengthAdjust="spacingAndGlyphs" font-weight="normal">GND</text>
<text transform="translate(645.8 387.4) rotate(45)" x="0" y="0" font-size="10.8" fill="#f3a24e" text-anchor="middle" dominant-baseline="central" textLength="19" lengthAdjust="spacingAndGlyphs" font-weight="normal">N$3</text>
<text transform="translate(692 402.4)" x="0" y="0" font-size="10.8" fill="#f3a24e" text-anchor="middle" dominant-baseline="central" textLength="18" lengthAdjust="spacingAndGlyphs" font-weight="normal">N$3</text>
<text transform="translate(598.3 417.4) rotate(45)" x="0" y="0" font-size="10.8" fill="#f3a24e" text-anchor="middle" dominant-baseline="central" textLength="19" lengthAdjust="spacingAndGlyphs" font-weight="normal">N$1</text>
<text transform="translate(651 432.8)" x="0" y="0" font-size="10.8" fill="#f3a24e" text-anchor="middle" dominant-baseline="central" textLength="18" lengthAdjust="spacingAndGlyphs" font-weight="normal">N$1</text>
<text transform="translate(717.6 432.8)" x="0" y="0" font-size="10.8" fill="#f3a24e" text-anchor="middle" dominant-baseline="central" textLength="17.5" lengthAdjust="spacingAndGlyphs" font-weight="normal">N$1</text>
<text transform="translate(787.3 414.3) rotate(-45)" x="0" y="0" font-size="10.8" fill="#f3a24e" text-anchor="middle" dominant-baseline="central" textLength="19" lengthAdjust="spacingAndGlyphs" font-weight="normal">N$1</text>
<text transform="translate(812.1 448.4) rotate(-45)" x="0" y="0" font-size="10.8" fill="#f3a24e" text-anchor="middle" dominant-baseline="central" textLength="21" lengthAdjust="spacingAndGlyphs" font-weight="normal">GND</text>
<text transform="translate(649.3 449.5) rotate(45)" x="0" y="0" font-size="10.8" fill="#f3a24e" text-anchor="middle" dominant-baseline="central" textLength="19" lengthAdjust="spacingAndGlyphs" font-weight="normal">N$1</text>
<text transform="translate(769.2 490.3) rotate(-90)" x="0" y="0" font-size="10.8" fill="#f3a24e" text-anchor="middle" dominant-baseline="central" textLength="20.6" lengthAdjust="spacingAndGlyphs" font-weight="normal">GND</text>
<text transform="translate(444 474.4) rotate(-90)" x="0" y="0" font-size="10.8" fill="#f3a24e" text-anchor="middle" dominant-baseline="central" textLength="24" lengthAdjust="spacingAndGlyphs" font-weight="normal">VCC</text>
<text transform="translate(560.3 473.4) rotate(45)" x="0" y="0" font-size="10.8" fill="#f3a24e" text-anchor="middle" dominant-baseline="central" textLength="21" lengthAdjust="spacingAndGlyphs" font-weight="normal">VCC</text>
<text transform="translate(583 517.1) rotate(-90)" x="0" y="0" font-size="10.8" fill="#f3a24e" text-anchor="middle" dominant-baseline="central" textLength="20.6" lengthAdjust="spacingAndGlyphs" font-weight="normal">VCC</text>
<text transform="translate(622 557.4)" x="0" y="0" font-size="10.8" fill="#f3a24e" text-anchor="middle" dominant-baseline="central" textLength="20.7" lengthAdjust="spacingAndGlyphs" font-weight="normal">VCC</text>
<text transform="translate(660.9 587) rotate(-90)" x="0" y="0" font-size="10.8" fill="#f3a24e" text-anchor="middle" dominant-baseline="central" textLength="20" lengthAdjust="spacingAndGlyphs" font-weight="normal">VCC</text>
<text transform="translate(317.5 515.7) rotate(-90)" x="0" y="0" font-size="10.8" fill="#f3a24e" text-anchor="middle" dominant-baseline="central" textLength="20.6" lengthAdjust="spacingAndGlyphs" font-weight="normal">GND</text>
<text transform="translate(351 510) rotate(-90)" x="0" y="0" font-size="10.8" fill="#f3a24e" text-anchor="middle" dominant-baseline="central" textLength="17.5" lengthAdjust="spacingAndGlyphs" font-weight="normal">N$2</text>
<text transform="translate(404.8 542.3)" x="0" y="0" font-size="10.8" fill="#f3a24e" text-anchor="middle" dominant-baseline="central" textLength="17.6" lengthAdjust="spacingAndGlyphs" font-weight="normal">N$2</text>
<text transform="translate(335 648.4) rotate(45)" x="0" y="0" font-size="10.8" fill="#f3a24e" text-anchor="middle" dominant-baseline="central" textLength="21" lengthAdjust="spacingAndGlyphs" font-weight="normal">GND</text>
<text transform="translate(385.3 665.9)" x="0" y="0" font-size="10.8" fill="#f3a24e" text-anchor="middle" dominant-baseline="central" textLength="21" lengthAdjust="spacingAndGlyphs" font-weight="normal">GND</text>
<text transform="translate(435.2 648.4) rotate(-45)" x="0" y="0" font-size="10.8" fill="#f3a24e" text-anchor="middle" dominant-baseline="central" textLength="21" lengthAdjust="spacingAndGlyphs" font-weight="normal">GND</text>
<text transform="translate(617.3 623.2) rotate(45)" x="0" y="0" font-size="10.8" fill="#f3a24e" text-anchor="middle" dominant-baseline="central" textLength="20" lengthAdjust="spacingAndGlyphs" font-weight="normal">GND</text>
<text transform="translate(703.7 642)" x="0" y="0" font-size="10.8" fill="#f3a24e" text-anchor="middle" dominant-baseline="central" textLength="20.7" lengthAdjust="spacingAndGlyphs" font-weight="normal">GND</text>
<text transform="translate(786.6 580.6) rotate(-90)" x="0" y="0" font-size="10.8" fill="#f3a24e" text-anchor="middle" dominant-baseline="central" textLength="20" lengthAdjust="spacingAndGlyphs" font-weight="normal">GND</text></g>
</svg>
<!--PCBE-->
<svg width="40" height="330" style="left:1241px;top:0" viewBox="1310 173 40 330" font-family="Liberation Sans,sans-serif">
<rect x="1317.8" y="182" width="27.6" height="145.3" fill="#454545"/>
<rect x="1323" y="190" width="17" height="16" rx="1.2" fill="#1f8b4c"/>
<rect x="1327.2" y="194.2" width="8.6" height="7.6" fill="none" stroke="#e6d23c" stroke-width="1.4"/>
<path d="M1329 192.4 V194 M1331.5 192.4 V194 M1334 192.4 V194 M1329 202 V203.6 M1331.5 202 V203.6 M1334 202 V203.6" stroke="#e6d23c" stroke-width="1"/>
<text transform="translate(1327.2 213.8) rotate(90)" font-size="12.4" font-weight="bold" fill="#f2f2f2" textLength="101.4" lengthAdjust="spacingAndGlyphs">MANUFACTURING</text>
<rect x="1317.8" y="343.4" width="27.6" height="145.4" fill="#454545"/>
<rect x="1323.4" y="362" width="16.2" height="16" rx="1.6" fill="#f0a31f"/>
<path d="M1327.6 365.4 H1335.4 V368 H1330.4 V369.8 H1334.2 V372.2 H1330.4 V375 H1327.6 Z" fill="#5a4630"/>
<text transform="translate(1327.2 389.2) rotate(90)" font-size="12.4" font-weight="bold" fill="#f2f2f2" textLength="68" lengthAdjust="spacingAndGlyphs">FUSION 360</text>
</svg>

</div>
<div id="vs">
<div class="abs" style="left:0;top:202px;width:15px;height:190px;background:#cdcdcd"></div>
<svg width="17" height="511" style="left:0;top:0" viewBox="0 0 17 511"><path d="M5 11.6 L8.5 8 L12 11.6 M5 501.4 L8.5 505 L12 501.4" fill="none" stroke="#444" stroke-width="1.7"/></svg>
</div>
<div id="hs">
<div class="abs" style="left:87.5px;top:1px;width:782px;height:14px;background:#cdcdcd"></div>
<svg width="1279" height="17" style="left:0;top:-1px" viewBox="0 0 1279 17"><path d="M9.6 5 L6 8.5 L9.6 12 M1269.2 5 L1272.8 8.5 L1269.2 12" fill="none" stroke="#444" stroke-width="1.7"/></svg>
</div>
<div id="status">
<div class="abs" id="st" style="left:5.2px;top:5.5px;font-family:'DejaVu Sans','Liberation Sans',sans-serif;font-size:11px;line-height:16px;white-space:nowrap;color:#333;transform-origin:0 0;transform:scaleX(1.012)">Left-click to select object to move</div>
<svg width="90" height="25" style="left:1275px;top:0" viewBox="1275 701 90 25">
<g stroke="#d6d6d6" stroke-width="1" shape-rendering="crispEdges"><line x1="1287.5" y1="703" x2="1287.5" y2="726"/><line x1="1313.5" y1="703" x2="1313.5" y2="726"/><line x1="1339.5" y1="703" x2="1339.5" y2="726"/></g>
<path d="M1306.7 705.6 L1292 714.6 L1301.2 716.4 L1298.2 724.2 L1311.4 714.8 L1302.8 712.8 Z" fill="#1fae4b"/>
<circle cx="1327.9" cy="714.9" r="9.9" fill="#6b6b6b"/>
<rect x="1326.7" y="708" width="2.4" height="9.6" rx="1" fill="#fff"/><circle cx="1327.9" cy="720.5" r="1.5" fill="#fff"/>
<path d="M1346.4 707.8 H1356 V715.5 L1361.5 722.3" fill="none" stroke="#2b7fd3" stroke-width="1.6"/>
<circle cx="1346.4" cy="707.8" r="2.7" fill="#1fae4b"/><circle cx="1361.5" cy="722.3" r="2.7" fill="#1fae4b"/>
<path d="M1351 714.6 L1344.6 719.6 H1348.6 L1346.6 724.4 L1353.8 718.4 H1349.8 L1352.6 714.6 Z" fill="#5a5a5a"/>
</svg>
</div>
</body>
</html>
